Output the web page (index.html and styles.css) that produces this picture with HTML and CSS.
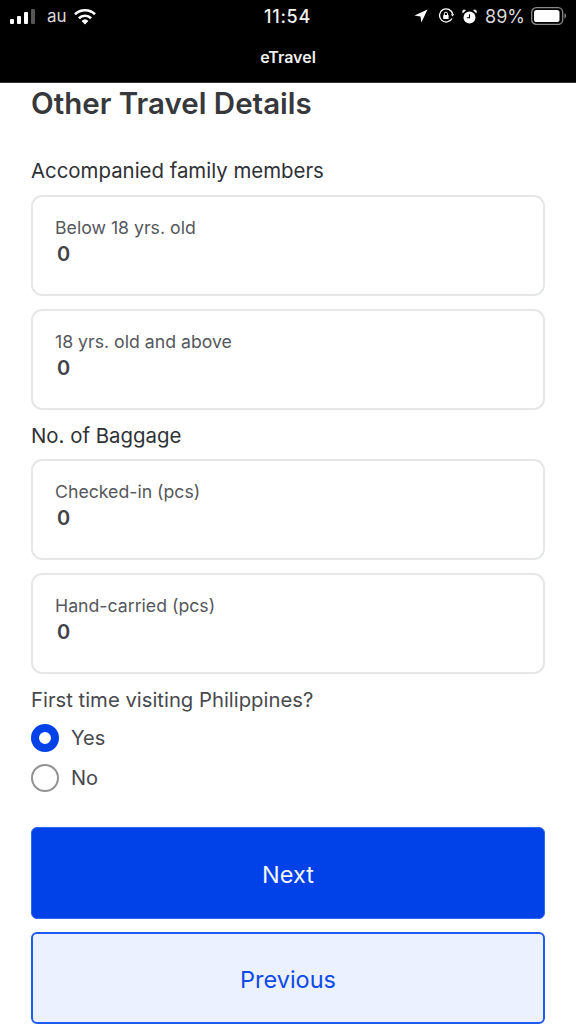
FILE: index.html
```html
<!DOCTYPE html>
<html lang="en">
<head>
<meta charset="utf-8">
<title>eTravel</title>
<link rel="stylesheet" href="styles.css">
</head>
<body>
<header class="topbar">
  <div class="status">
    <div class="status-left">
      <svg class="signal" viewBox="0 0 25 15" width="25" height="15"><rect x="0" y="10" width="4" height="5" rx="1" fill="#fff"/><rect x="7" y="7" width="4" height="8" rx="1" fill="#fff"/><rect x="14" y="3" width="4" height="12" rx="1" fill="#fff"/><rect x="21" y="0" width="4" height="15" rx="1" fill="#555"/></svg>
      <span class="carrier">au</span>
      <svg class="wifi" viewBox="0 0 24 17" width="24" height="17"><path d="M12 16.5l-3.4-3.6a5 5 0 0 1 6.8 0z" fill="#fff"/><path d="M5.9 10.2a8.8 8.8 0 0 1 12.2 0" fill="none" stroke="#fff" stroke-width="2.6"/><path d="M2 6.3a14.3 14.3 0 0 1 20 0" fill="none" stroke="#fff" stroke-width="2.6"/></svg>
    </div>
    <div class="clock">11:54</div>
    <div class="status-right">
      <svg class="arrow" viewBox="0 0 14 14" width="14" height="14"><path d="M13.5.5L.5 6.6l6 .9.9 6z" fill="#fff"/></svg>
      <svg class="lock" viewBox="0 0 16 16" width="16" height="16"><path d="M14 10.5A6.6 6.6 0 1 1 14.6 6" fill="none" stroke="#fff" stroke-width="1.3"/><path d="M12.8 6.2h3.4l-1.7 2.4z" fill="#fff"/><rect x="5.2" y="7" width="5.4" height="4" rx=".6" fill="#fff"/><path d="M6.3 7V5.8a1.6 1.6 0 0 1 3.2 0V7" fill="none" stroke="#fff" stroke-width="1"/></svg>
      <svg class="alarm" viewBox="0 0 16 16" width="15" height="15"><circle cx="8" cy="9" r="6.4" fill="#fff"/><path d="M8 5.5V9.3H5.2" fill="none" stroke="#000" stroke-width="1.2"/><path d="M.8 4.2L3.8 1.4 1.8.9.6 2.2z M15.2 4.2L12.2 1.4 14.2.9 15.4 2.2z" fill="#fff" stroke="#fff" stroke-width=".6"/></svg>
      <span class="battery-pct">89%</span>
      <svg class="battery" viewBox="0 0 36 18" width="36" height="18"><rect x=".7" y=".7" width="31" height="16.6" rx="4.6" fill="none" stroke="#8a8a8a" stroke-width="1.3"/><rect x="3" y="3" width="25.5" height="12" rx="2.6" fill="#fff"/><path d="M33.5 6.3v5.4a2.8 2.8 0 0 0 1.6-2.7 2.8 2.8 0 0 0-1.6-2.7z" fill="#8a8a8a"/></svg>
    </div>
  </div>
  <div class="app-title">eTravel</div>
</header>
<main class="form">
  <h1 class="heading">Other Travel Details</h1>
  <p class="section-label family-label">Accompanied family members</p>
  <div class="field-group">
    <div class="field"><span class="field-label">Below 18 yrs. old</span><span class="field-value">0</span></div>
    <div class="field"><span class="field-label">18 yrs. old and above</span><span class="field-value">0</span></div>
  </div>
  <p class="section-label baggage-label">No. of Baggage</p>
  <div class="field-group">
    <div class="field"><span class="field-label">Checked-in (pcs)</span><span class="field-value">0</span></div>
    <div class="field"><span class="field-label">Hand-carried (pcs)</span><span class="field-value">0</span></div>
  </div>
  <p class="section-label first-label">First time visiting Philippines?</p>
  <div class="radios">
    <div class="radio-row"><span class="radio radio-on"></span><span class="radio-text">Yes</span></div>
    <div class="radio-row"><span class="radio"></span><span class="radio-text">No</span></div>
  </div>
  <div class="actions">
    <button class="btn btn-primary" type="button">Next</button>
    <button class="btn btn-secondary" type="button">Previous</button>
  </div>
</main>
</body>
</html>
```
FILE: styles.css
```css
* { box-sizing: border-box; }
html, body { margin: 0; padding: 0; }
body {
  width: 576px;
  height: 1024px;
  overflow: hidden;
  background: #fff;
  font-family: Inter, "Noto Sans", sans-serif;
  color: #2f3136;
}
.topbar {
  height: 83px;
  background: #000;
  border-bottom: 1px solid #333;
  color: #fff;
  padding-top: 4px;
}
.status {
  height: 24px;
  display: grid;
  grid-template-columns: 1fr auto 1fr;
  align-items: center;
  padding: 0 9px 0 10px;
}
.status-left, .status-right { display: flex; align-items: center; }
.status-left { gap: 12px; }
.status-right { justify-content: flex-end; gap: 8px; }
.carrier { font-size: 17px; color: #d8d8d8; margin-right: -6px; }
.clock { font-size: 18px; font-weight: 500; letter-spacing: .7px; color: #f2f2f2; margin-left: -2px; }
.arrow { margin-right: 2px; }
.battery-pct { font-size: 18px; color: #d8d8d8; margin-right: -2px; }
.app-title {
  margin-top: 18px;
  text-align: center;
  font-size: 16px;
  font-weight: 600;
  line-height: 22px;
  color: #f0f0f0;
}
.form { padding: 0 31px; }
.heading {
  margin: 2px 0 0;
  font-size: 29.5px;
  font-weight: 600;
  line-height: 36px;
  color: #37383c;
}
.section-label {
  margin: 0;
  font-size: 20.4px;
  line-height: 28px;
  color: #2f3136;
}
.family-label { margin-top: 36px; margin-bottom: 10px; }
.baggage-label { margin-top: 12px; margin-bottom: 9px; }
.first-label { margin-top: 12px; margin-bottom: 10px; font-size: 20.3px; color: #48494d; }
.field-group { display: flex; flex-direction: column; gap: 13px; }
.field {
  height: 101px;
  border: 2px solid #e6e7e8;
  border-radius: 11px;
  padding: 19px 22px 0;
  display: flex;
  flex-direction: column;
}
.field-label { font-size: 17.7px; line-height: 24px; color: #55575c; }
.field-value { font-size: 20px; font-weight: 600; line-height: 28px; color: #3f4248; padding-left: 2px; }
.radios { display: flex; flex-direction: column; gap: 12px; }
.radio-row { display: flex; align-items: center; gap: 12px; height: 28px; }
.radio {
  width: 28px;
  height: 28px;
  border-radius: 50%;
  border: 2px solid #929292;
  background: #fff;
}
.radio-on { border: 8px solid #0041e8; }
.radio-text { font-size: 20px; color: #48494d; }
.actions { display: flex; flex-direction: column; gap: 13px; margin-top: 35px; }
.btn {
  height: 92px;
  width: 100%;
  border-radius: 6px;
  font-family: inherit;
  font-size: 23.5px;
  padding: 2px 0 0;
}
.btn-primary { background: #0041e8; border: 1px solid #2f66f0; color: #f2f5ff; }
.btn-secondary { background: #ebf1fe; border: 2px solid #1f5bee; color: #0f4ae6; }
```
